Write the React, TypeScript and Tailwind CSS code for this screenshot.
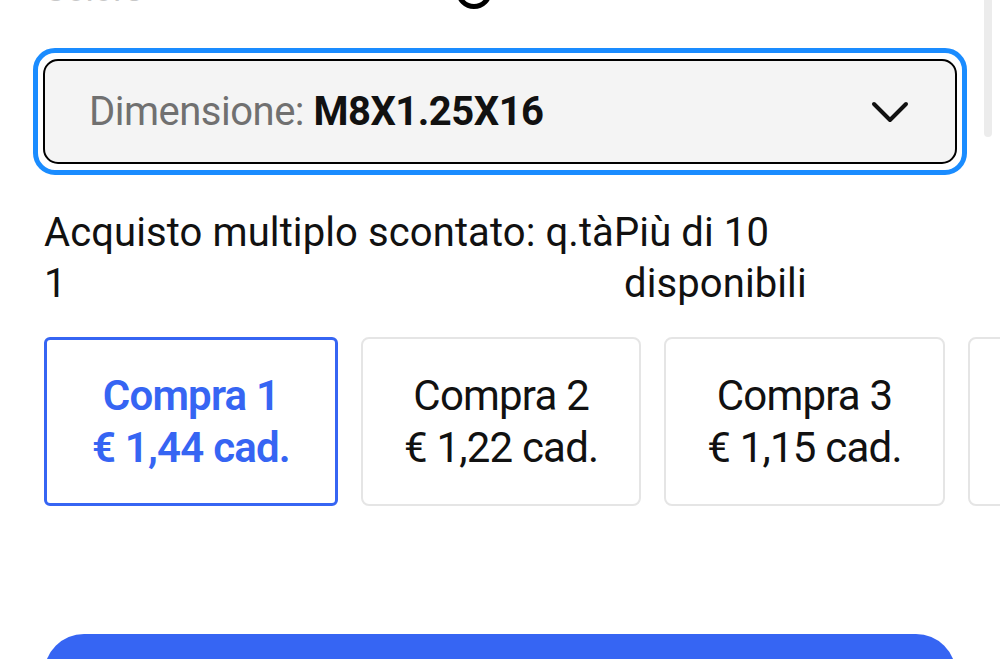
import { useState } from "react";

const tiers = [
  { qty: 1, price: "1,44" },
  { qty: 2, price: "1,22" },
  { qty: 3, price: "1,15" },
  { qty: 4, price: "1,08" },
];

function Chevron() {
  return (
    <svg width="38" height="24" viewBox="0 0 38 24" fill="none">
      <path
        d="M3 4 L19 20 L35 4"
        stroke="#111"
        strokeWidth="4"
        strokeLinecap="round"
        strokeLinejoin="round"
      />
    </svg>
  );
}

export default function App() {
  const [selected, setSelected] = useState(1);

  return (
    <div
      className="relative h-[659px] w-[1000px] overflow-hidden bg-white text-[#111]"
      style={{ fontFamily: "Roboto, 'Liberation Sans', sans-serif" }}
    >
      {/* scroll track */}
      <div className="absolute right-[8px] top-0 h-[137px] w-[8px] rounded-b-full bg-[#ececec]" />

      <main className="flex flex-col px-[44px]">
        {/* heading, scrolled mostly out of view */}
        <div className="-mt-[30px] flex h-[39px] items-end">
          <span className="w-[412px] text-[34px] leading-[39px] text-[#c8c8c8]">Colore</span>
          <span className="block h-[36px] w-[36px] rounded-full border-[5px] border-black" />
        </div>

        <button className="-mx-[11px] mt-[39px] rounded-[22px] border-[5px] border-[#1a8cff] bg-white px-[5px] py-[6px] text-left">
          <div className="flex h-[105px] items-center justify-between rounded-[15px] border-[2.5px] border-black bg-[#f4f4f4] pl-[44px] pr-[46px]">
            <span className="text-[40px] tracking-[-0.5px]">
              <span className="text-[#707070]">Dimensione: </span>
              <span className="font-bold">M8X1.25X16</span>
            </span>
            <Chevron />
          </div>
        </button>

        <div className="mt-[32px] text-[40px] leading-[51px] tracking-[0.1px]">
          <div className="flex">
            <span>Acquisto multiplo scontato: q.tà</span>
            <span>Più di 10</span>
          </div>
          <div className="flex">
            <span className="w-[580px]">1</span>
            <span>disponibili</span>
          </div>
        </div>

        <div className="mt-[28px] flex gap-[23px] whitespace-nowrap text-[42px] leading-[52px] tracking-[-0.8px]">
          {tiers.map((t) => {
            const active = t.qty === selected;
            return (
              <button
                key={t.qty}
                onClick={() => setSelected(t.qty)}
                className={
                  active
                    ? "flex h-[169px] shrink-0 flex-col items-center justify-center rounded-[6px] border-[3px] border-[#3665f3] px-[45px] font-semibold text-[#3665f3]"
                    : "flex h-[169px] shrink-0 flex-col items-center justify-center rounded-[8px] border-2 border-[#e5e5e5] px-[41px]"
                }
              >
                <span>Compra {t.qty}</span>
                <span>€ {t.price} cad.</span>
              </button>
            );
          })}
        </div>

        <button className="mt-[128px] h-[80px] w-full rounded-[56px] bg-[#3665f3] text-[34px] font-bold text-white" />
      </main>
    </div>
  );
}
